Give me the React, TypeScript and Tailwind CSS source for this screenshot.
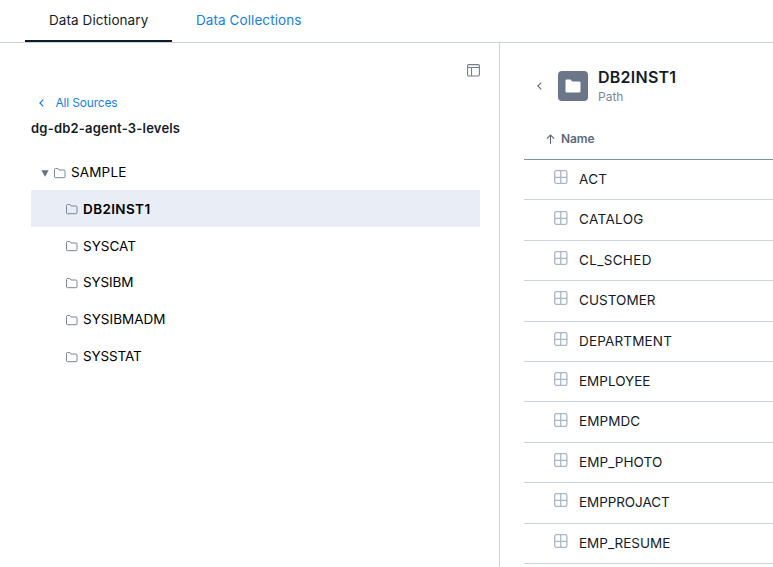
const schemas = [
  { name: 'DB2INST1', selected: true, tracking: 'tracking-[0.38px]' },
  { name: 'SYSCAT', selected: false, tracking: 'tracking-[0px]' },
  { name: 'SYSIBM', selected: false, tracking: 'tracking-[-0.15px]' },
  { name: 'SYSIBMADM', selected: false, tracking: 'tracking-[0.02px]' },
  { name: 'SYSSTAT', selected: false, tracking: 'tracking-[-0.15px]' },
];

const tables = [
  { name: 'ACT', tracking: 'tracking-[0.3px]' },
  { name: 'CATALOG', tracking: 'tracking-[0.35px]' },
  { name: 'CL_SCHED', tracking: 'tracking-[0.33px]' },
  { name: 'CUSTOMER', tracking: 'tracking-[0.05px]' },
  { name: 'DEPARTMENT', tracking: 'tracking-[0.17px]' },
  { name: 'EMPLOYEE', tracking: 'tracking-[0px]' },
  { name: 'EMPMDC', tracking: 'tracking-[0.1px]' },
  { name: 'EMP_PHOTO', tracking: 'tracking-[0.07px]' },
  { name: 'EMPPROJACT', tracking: 'tracking-[-0.08px]' },
  { name: 'EMP_RESUME', tracking: 'tracking-[0px]' },
];

function FolderOutline() {
  return (
    <svg width="12" height="11" viewBox="0 0 12 11" fill="none" stroke="#7c8798" className="mt-[3px] shrink-0">
      <path d="M.5 9V1.5Q.5.5 1.5.5H3.9L5 2H10Q11 2 11 3V8.8Q11 9.7 10 9.7H1.5Q.5 9.7.5 8.7Z" />
    </svg>
  );
}

function Chevron({ className }: { className: string }) {
  return (
    <svg width="5" height="8" viewBox="0 0 5 8" fill="none" stroke="currentColor" strokeWidth="1.2" className={className}>
      <path d="M4.3.6.9 4 4.3 7.4" />
    </svg>
  );
}

function TableIcon() {
  return (
    <svg width="14" height="14" viewBox="0 0 14 14" fill="none" stroke="#aab6c7" strokeWidth="1.3" className="-mt-1 shrink-0">
      <rect x=".7" y=".7" width="12.2" height="12.6" rx="1.6" />
      <path d="M6.8 1V13M1 7.4H13" />
    </svg>
  );
}

export default function App() {
  return (
    <div className="flex h-[567px] w-[773px] flex-col overflow-hidden bg-white font-['Inter','Liberation_Sans',sans-serif] text-[13.5px] text-[#141c28]">
      <nav className="flex h-[43px] shrink-0 border-b border-[#c9d3de] pl-[25px]">
        <button className="h-[42px] w-[147px] border-b-2 border-[#111c2b] pt-px pl-6 text-left whitespace-nowrap">
          <span className="tracking-[0.08px]">Data Dictionary</span>
        </button>
        <button className="h-[42px] pb-px pl-6 text-left whitespace-nowrap text-[#1a7fe0]">
          <span className="tracking-[0.08px]">Data Collections</span>
        </button>
      </nav>
      <div className="flex min-h-0 flex-1">
        <aside className="w-[500px] shrink-0 border-r border-[#c9d3de] pr-[19px] pl-[31px]">
          <div className="flex h-[51px] justify-end pt-[21px]">
            <svg width="13" height="13" viewBox="0 0 13 13" fill="none" stroke="#717f92" strokeWidth="1.1">
              <rect x=".6" y=".6" width="11.8" height="11.4" rx="1.2" />
              <path d="M1 3.5H12M4.5 4V12" />
            </svg>
          </div>
          <div className="flex h-[18px] items-center pl-2 text-xs text-[#1a7fe0]">
            <Chevron className="mr-[11.5px]" />
            <span className="tracking-[-0.18px]">All Sources</span>
          </div>
          <h2 className="h-[42px] pt-1.5 text-[13px] leading-5 font-semibold">
            <span className="tracking-[0.2px]">dg-db2-agent-3-levels</span>
          </h2>
          <div className="flex h-[36px] items-center pl-2.5 text-black">
            <svg width="8" height="7" viewBox="0 0 8 7" className="mt-0.5 mr-[5px]" fill="#657386">
              <path d="M.3.3H7.7L4 6.7Z" />
            </svg>
            <FolderOutline />
            <span className="mt-px ml-[5px] tracking-[0.15px]">SAMPLE</span>
          </div>
          {schemas.map((s) => (
            <div
              key={s.name}
              className={`flex h-[36.8px] items-center pl-[35px] text-black ${s.selected ? 'bg-[#e9edf6] font-semibold' : ''}`}
            >
              <FolderOutline />
              <span className={`ml-[5px] ${s.selected ? 'mt-[1.5px]' : 'mt-px'} ${s.tracking}`}>{s.name}</span>
            </div>
          ))}
        </aside>
        <main className="min-w-0 flex-1 pl-6">
          <header className="flex h-[76px] items-center pt-[10px] pl-[13px]">
            <Chevron className="text-[#667486]" />
            <div className="ml-4 flex h-[30px] w-[30px] items-center justify-center rounded bg-[#6b7789]">
              <svg width="16" height="14" viewBox="0 0 16 14" fill="white">
                <path d="M.5 12V1.8Q.5.5 1.8.5H5.5L7.3 2.5H14.2Q15.5 2.5 15.5 3.8V12Q15.5 13.5 14.2 13.5H1.8Q.5 13.5.5 12Z" />
              </svg>
            </div>
            <div className="ml-2.5">
              <h1 className="text-base leading-5 font-semibold tracking-[0.25px]">DB2INST1</h1>
              <p className="pt-px text-xs leading-[18px] text-[#7b8796]">Path</p>
            </div>
          </header>
          <div className="flex h-[41px] items-center border-b border-[#8292a6] pl-[22px] text-xs font-semibold text-[#5d6979]">
            <svg width="9" height="10" viewBox="0 0 9 10" fill="none" stroke="#5d6979" strokeWidth="1.1" className="mr-1.5">
              <path d="M4.5 10V1M.8 4.7 4.5 1 8.2 4.7" />
            </svg>
            <span className="tracking-[-0.1px]">Name</span>
          </div>
          {tables.map((t) => (
            <div key={t.name} className="flex h-[40.4px] items-center border-b border-[#c9d3de] pb-px pl-[29.5px]">
              <TableIcon />
              <span className={`ml-[11.5px] ${t.tracking}`}>{t.name}</span>
            </div>
          ))}
        </main>
      </div>
    </div>
  );
}
